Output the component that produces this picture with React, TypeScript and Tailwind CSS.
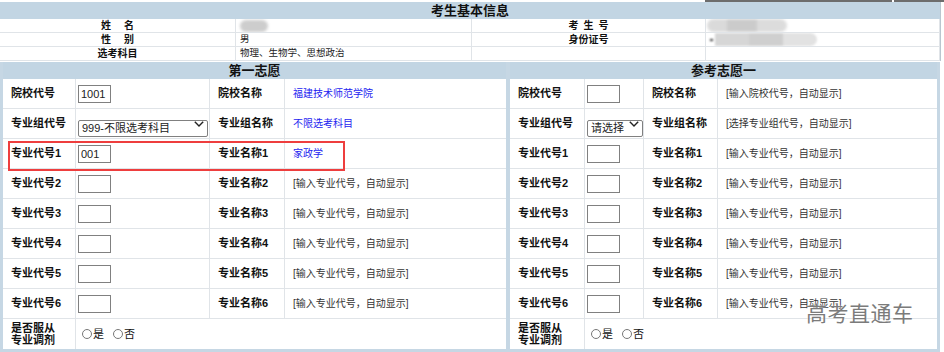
import React from 'react';

const FONT = "font-['Liberation_Sans','Noto_Sans_CJK_SC',sans-serif]";
const LINE = 'border-[#e0e4e8]';

type Cols = { l1: string; inp: string; l2: string };

const leftCols: Cols = { l1: 'w-[73px]', inp: 'w-[134px]', l2: 'w-[75px]' };
const rightCols: Cols = { l1: 'w-[75px]', inp: 'w-[59px]', l2: 'w-[74px]' };

function TextBox({ value }: { value?: string }) {
  return (
    <input
      readOnly
      value={value ?? ''}
      className="w-[33px] h-[18px] border border-[#808080] bg-white px-[2px] text-[11px] text-[#222] outline-none"
    />
  );
}

function Select({ value, width }: { value: string; width: string }) {
  return (
    <div className={`relative ${width} h-[17px]`}>
      <select
        defaultValue={value}
        className="w-full h-full appearance-none rounded-[2px] border border-[#808080] bg-white pl-[3px] text-[11px] leading-[15px] text-[#222] outline-none"
      >
        <option value={value}>{value}</option>
      </select>
      <svg className="absolute right-[4px] top-1/2 -translate-y-1/2 w-[10px] h-[6px] pointer-events-none" viewBox="0 0 10 6">
        <path d="M0.8 0.8 L5 5 L9.2 0.8" fill="none" stroke="#222" strokeWidth="1.4" />
      </svg>
    </div>
  );
}

function Radio({ label }: { label: string }) {
  return (
    <span className="flex items-center gap-[1px] text-[11px] text-[#111]">
      <span className="w-[10px] h-[10px] rounded-full border border-[#777] bg-white" />
      {label}
    </span>
  );
}

type Row = {
  label: React.ReactNode;
  field: React.ReactNode;
  name: string;
  value: string;
  blue?: boolean;
};

function FormRow({ cols, row }: { cols: Cols; row: Row }) {
  return (
    <div className={`flex h-[30px] border-b ${LINE}`}>
      <div className={`${cols.l1} shrink-0 flex items-center pl-[8px] border-r ${LINE} text-[11px] font-bold text-[#111]`}>
        {row.label}
      </div>
      <div className={`${cols.inp} shrink-0 flex items-center pl-[2px] border-r ${LINE}`}>{row.field}</div>
      <div className={`${cols.l2} shrink-0 flex items-center pl-[8px] border-r ${LINE} text-[11px] font-bold text-[#111]`}>
        {row.name}
      </div>
      <div className={`flex-1 flex items-center pl-[8px] text-[10px] ${row.blue ? 'text-[#2424f0]' : 'text-[#333]'}`}>
        {row.value}
      </div>
    </div>
  );
}

function Panel({ title, cols, rows, width }: { title: string; cols: Cols; rows: Row[]; width: string }) {
  return (
    <div className={`${width} shrink-0 flex flex-col border-b-[3px] border-[#c6d7e4]`}>
      <div className="h-[17px] bg-[#c2d5e3] flex items-center justify-center text-[13px] font-bold text-[#111]">{title}</div>
      {rows.map((r, i) => (
        <FormRow key={i} cols={cols} row={r} />
      ))}
      <div className="flex h-[30px]">
        <div className={`${cols.l1} shrink-0 flex flex-col justify-center pl-[8px] border-r ${LINE} text-[11px] font-bold leading-[12px] text-[#111]`}>
          <span>是否服从</span>
          <span>专业调剂</span>
        </div>
        <div className="flex-1 flex items-center gap-[9px] pl-[6px]">
          <Radio label="是" />
          <Radio label="否" />
        </div>
      </div>
    </div>
  );
}

const placeholder = '[输入专业代号，自动显示]';

const leftRows: Row[] = [
  { label: '院校代号', field: <TextBox value="1001" />, name: '院校名称', value: '福建技术师范学院', blue: true },
  { label: '专业组代号', field: <Select value="999-不限选考科目" width="w-[130px]" />, name: '专业组名称', value: '不限选考科目', blue: true },
  { label: '专业代号1', field: <TextBox value="001" />, name: '专业名称1', value: '家政学', blue: true },
  ...[2, 3, 4, 5, 6].map((n) => ({
    label: `专业代号${n}`,
    field: <TextBox />,
    name: `专业名称${n}`,
    value: placeholder,
  })),
];

const rightRows: Row[] = [
  { label: '院校代号', field: <TextBox />, name: '院校名称', value: '[输入院校代号，自动显示]' },
  { label: '专业组代号', field: <Select value="请选择" width="w-[57px]" />, name: '专业组名称', value: '[选择专业组代号，自动显示]' },
  ...[1, 2, 3, 4, 5, 6].map((n) => ({
    label: `专业代号${n}`,
    field: <TextBox />,
    name: `专业名称${n}`,
    value: placeholder,
  })),
];

function InfoRow({ children }: { children: React.ReactNode }) {
  return <div className={`flex h-[14px] border-b ${LINE}`}>{children}</div>;
}

// label chars are spread out like the old page does ("姓  名")
function InfoLabel({ chars, gap, width }: { chars: string[]; gap: string; width: string }) {
  return (
    <div className={`${width} shrink-0 flex items-center justify-center ${gap} border-r ${LINE} text-[10px] font-bold text-[#111]`}>
      {chars.map((c, i) => (
        <span key={i}>{c}</span>
      ))}
    </div>
  );
}

function InfoValue({ children, width }: { children?: React.ReactNode; width: string }) {
  return (
    <div className={`${width} shrink-0 flex items-center pl-[4px] border-r ${LINE} text-[9.5px] text-[#222] overflow-hidden`}>
      {children}
    </div>
  );
}

export default function App() {
  return (
    <div className={`relative w-[944px] h-[352px] overflow-hidden bg-white ${FONT}`}>
      {/* cut-off edge of the section above */}
      <div className="flex h-[2px]">
        <div className="w-[705px]" />
        <div className="w-[187px] bg-[#6d6d6d]" />
        <div className="w-[2px]" />
        <div className="flex-1 bg-[#6d6d6d]" />
      </div>

      {/* 考生基本信息 */}
      <div className="w-[941px] border-r border-[#b9c6d0]">
        <div className="h-[17px] bg-[#c2d5e3] flex items-center justify-center text-[13px] font-bold text-[#111]">考生基本信息</div>
        <InfoRow>
          <InfoLabel chars={['姓', '名']} gap="gap-[13px]" width="w-[236px]" />
          <InfoValue width="w-[236px]">
            <div className="w-[28px] h-[12px] rounded-full bg-[#cdcdcd] blur-[1.5px]" />
          </InfoValue>
          <InfoLabel chars={['考', '生', '号']} gap="gap-[5px]" width="w-[234px]" />
          <InfoValue width="flex-1">
            <div className="flex -ml-[3px] blur-[1.5px]">
              <div className="w-[20px] h-[13px] bg-[#dadada] rounded-l-full" />
              <div className="w-[30px] h-[13px] bg-[#cbcbcb]" />
              <div className="w-[30px] h-[13px] bg-[#dcdcdc] rounded-r-full" />
            </div>
          </InfoValue>
        </InfoRow>
        <InfoRow>
          <InfoLabel chars={['性', '别']} gap="gap-[13px]" width="w-[236px]" />
          <InfoValue width="w-[236px]">男</InfoValue>
          <InfoLabel chars={['身份证号']} gap="gap-0" width="w-[234px]" />
          <InfoValue width="flex-1">
            <div className="flex items-center blur-[1.2px]">
              <div className="w-[3px] h-[2px] bg-[#333] mr-[2px]" />
              <div className="w-[34px] h-[13px] bg-[#d6d6d6]" />
              <div className="w-[34px] h-[13px] bg-[#cfcfcf]" />
              <div className="w-[34px] h-[13px] bg-[#e2e2e2] rounded-r-full" />
            </div>
          </InfoValue>
        </InfoRow>
        <InfoRow>
          <InfoLabel chars={['选考科目']} gap="gap-0" width="w-[236px]" />
          <InfoValue width="w-[236px]">物理、生物学、思想政治</InfoValue>
          <InfoLabel chars={[]} gap="gap-0" width="w-[234px]" />
          <InfoValue width="flex-1" />
        </InfoRow>
      </div>

      {/* 志愿 panels */}
      <div className="flex mt-[1px]">
        <div className="flex shrink-0 border-l-[3px] border-r-[2px] border-[#c6d7e4]">
          <Panel title="第一志愿" cols={leftCols} rows={leftRows} width="w-[503px]" />
        </div>
        <div className="flex shrink-0 border-l-[2px] border-r-[3px] border-[#c6d7e4]">
          <Panel title="参考志愿一" cols={rightCols} rows={rightRows} width="w-[427px]" />
        </div>
      </div>

      {/* highlight box */}
      <div className="absolute left-[8px] top-[141px] w-[337px] h-[30px] border-2 border-[#ee3e3e]" />

      {/* watermark */}
      <div className="absolute left-[806px] top-[298px] text-[21px] tracking-[0.5px] text-[#7b7b7b] [text-shadow:0_0_2px_#fff]">
        高考直通车
      </div>
    </div>
  );
}
